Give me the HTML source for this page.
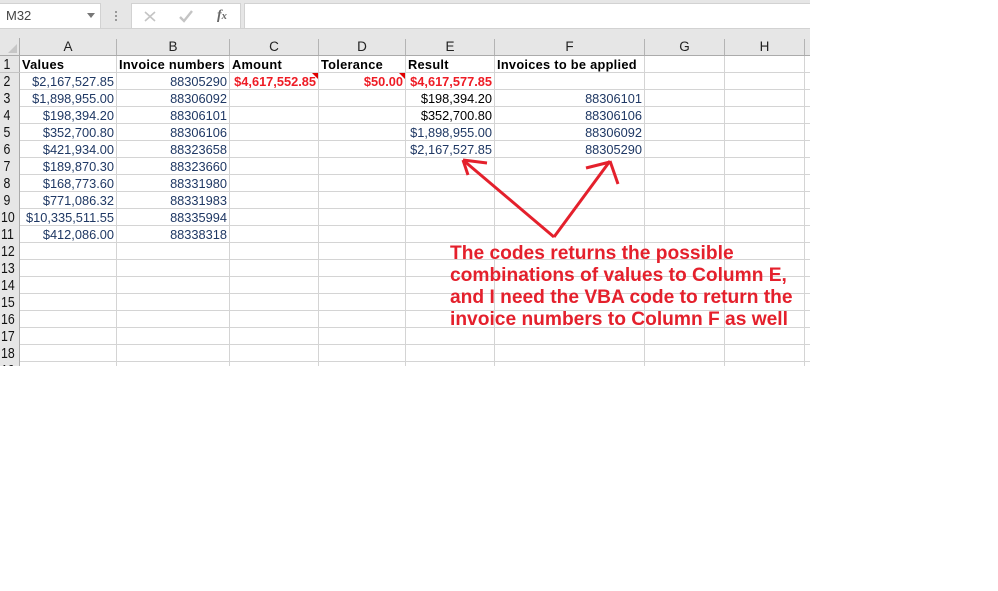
<!DOCTYPE html>
<html>
<head>
<meta charset="utf-8">
<style>
html,body{margin:0;padding:0;background:#fff;}
body{width:998px;height:591px;position:relative;overflow:hidden;font-family:"Liberation Sans",Arial,sans-serif;}
div{position:absolute;box-sizing:border-box;}
.h{background:#d4d4d4;height:1px;left:20px;width:790px;}
.v{background:#d4d4d4;width:1px;top:56px;height:310px;}
.c{font-size:12.8px;line-height:17px;height:17px;white-space:nowrap;color:#1f3864;text-align:right;}
.b{font-weight:bold;color:#000;text-align:left;letter-spacing:.28px;}
.r{font-weight:bold;color:#ee1c25;}
.k{color:#000;}
.rh{left:0;width:14px;text-align:center;font-size:14.5px;line-height:19px;height:17px;color:#111;transform:scaleX(.85);}
.ch{top:39px;text-align:center;font-size:13.5px;line-height:16px;height:16px;color:#222;}
.tick{top:39px;width:1px;height:16px;background:#b4b4b4;}
.t{font-size:19.2px;font-weight:bold;color:#e4202c;line-height:22px;white-space:nowrap;left:450px;height:22px;}
.tri{width:0;height:0;border-top:6px solid #e00000;border-left:6px solid transparent;}
</style>
</head>
<body>
<!-- top bar -->
<div style="left:0;top:0;width:810px;height:38px;background:#e6e6e6"></div>
<div style="left:0;top:3px;width:101px;height:26px;background:#fff;border:1px solid #d2d2d2;border-left:0"></div>
<div style="left:6px;top:8px;font-size:13px;line-height:16px;color:#444">M32</div>
<div style="left:87px;top:13px;width:0;height:0;border-left:4px solid transparent;border-right:4px solid transparent;border-top:5px solid #777"></div>
<div style="left:115px;top:11px;width:2px;height:2px;background:#999"></div>
<div style="left:115px;top:15px;width:2px;height:2px;background:#999"></div>
<div style="left:115px;top:19px;width:2px;height:2px;background:#999"></div>
<div style="left:131px;top:3px;width:110px;height:26px;background:#fff;border:1px solid #d2d2d2"></div>
<svg style="position:absolute;left:131px;top:3px" width="110" height="26" viewBox="0 0 110 26">
<path d="M14 9L24 18M24 9L14 18" stroke="#c4c4c4" stroke-width="1.6" fill="none"/>
<path d="M49 14L53 18L61 8" stroke="#c4c4c4" stroke-width="2.4" fill="none"/>
</svg>
<div style="left:217px;top:8px;font-family:'Liberation Serif',serif;font-style:italic;font-weight:bold;font-size:14px;line-height:16px;color:#666">f<span style="font-size:10.5px">x</span></div>
<div style="left:244px;top:3px;width:566px;height:26px;background:#fff;border:1px solid #d2d2d2;border-right:0"></div>
<div style="left:0;top:28px;width:810px;height:1px;background:#d2d2d2"></div>

<!-- headers -->
<div style="left:0;top:38px;width:810px;height:18px;background:#e6e6e6"></div>
<div style="left:0;top:55px;width:810px;height:1px;background:#ababab"></div>
<div style="left:0;top:56px;width:20px;height:310px;background:#e6e6e6"></div>
<div style="left:19px;top:38px;width:1px;height:328px;background:#ababab"></div>
<svg style="position:absolute;left:8px;top:44px" width="9" height="9"><path d="M9 0V9H0Z" fill="#c6c6c6"/></svg>
<div class="tick" style="left:116px"></div><div class="tick" style="left:229px"></div><div class="tick" style="left:318px"></div><div class="tick" style="left:405px"></div><div class="tick" style="left:494px"></div><div class="tick" style="left:644px"></div><div class="tick" style="left:724px"></div><div class="tick" style="left:804px"></div>
<div class="ch" style="left:20px;width:96px">A</div>
<div class="ch" style="left:117px;width:112px">B</div>
<div class="ch" style="left:230px;width:88px">C</div>
<div class="ch" style="left:319px;width:86px">D</div>
<div class="ch" style="left:406px;width:88px">E</div>
<div class="ch" style="left:495px;width:149px">F</div>
<div class="ch" style="left:645px;width:79px">G</div>
<div class="ch" style="left:725px;width:79px">H</div>

<!-- row numbers -->
<div class="rh" style="top:56px">1</div><div class="rh" style="top:73px">2</div><div class="rh" style="top:90px">3</div><div class="rh" style="top:107px">4</div><div class="rh" style="top:124px">5</div><div class="rh" style="top:141px">6</div><div class="rh" style="top:158px">7</div><div class="rh" style="top:175px">8</div><div class="rh" style="top:192px">9</div><div class="rh" style="top:209px">10</div><div class="rh" style="top:226px">11</div><div class="rh" style="top:243px">12</div><div class="rh" style="top:260px">13</div><div class="rh" style="top:277px">14</div><div class="rh" style="top:294px">15</div><div class="rh" style="top:311px">16</div><div class="rh" style="top:328px">17</div><div class="rh" style="top:345px">18</div>
<div style="left:0;top:362px;width:14px;height:4px;overflow:hidden;text-align:center;font-size:14.5px;line-height:19px;color:#111;transform:scaleX(.85)">19</div>
<div style="left:0;top:72px;width:20px;height:1px;background:#c4c4c4"></div>

<!-- grid -->
<div class="h" style="top:72px"></div><div class="h" style="top:89px"></div><div class="h" style="top:106px"></div><div class="h" style="top:123px"></div><div class="h" style="top:140px"></div><div class="h" style="top:157px"></div><div class="h" style="top:174px"></div><div class="h" style="top:191px"></div><div class="h" style="top:208px"></div><div class="h" style="top:225px"></div><div class="h" style="top:242px"></div><div class="h" style="top:259px"></div><div class="h" style="top:276px"></div><div class="h" style="top:293px"></div><div class="h" style="top:310px"></div><div class="h" style="top:327px"></div><div class="h" style="top:344px"></div><div class="h" style="top:361px"></div>
<div class="v" style="left:116px"></div><div class="v" style="left:229px"></div><div class="v" style="left:318px"></div><div class="v" style="left:405px"></div><div class="v" style="left:494px"></div><div class="v" style="left:644px"></div><div class="v" style="left:724px"></div><div class="v" style="left:804px"></div>

<!-- row 1 headings -->
<div class="c b" style="left:22px;top:56px">Values</div>
<div class="c b" style="left:119px;top:56px">Invoice numbers</div>
<div class="c b" style="left:232px;top:56px">Amount</div>
<div class="c b" style="left:321px;top:56px">Tolerance</div>
<div class="c b" style="left:408px;top:56px">Result</div>
<div class="c b" style="left:497px;top:56px">Invoices to be applied</div>

<!-- col A -->
<div class="c" style="right:884px;top:73px">$2,167,527.85</div>
<div class="c" style="right:884px;top:90px">$1,898,955.00</div>
<div class="c" style="right:884px;top:107px">$198,394.20</div>
<div class="c" style="right:884px;top:124px">$352,700.80</div>
<div class="c" style="right:884px;top:141px">$421,934.00</div>
<div class="c" style="right:884px;top:158px">$189,870.30</div>
<div class="c" style="right:884px;top:175px">$168,773.60</div>
<div class="c" style="right:884px;top:192px">$771,086.32</div>
<div class="c" style="right:884px;top:209px">$10,335,511.55</div>
<div class="c" style="right:884px;top:226px">$412,086.00</div>
<!-- col B -->
<div class="c" style="right:771px;top:73px">88305290</div>
<div class="c" style="right:771px;top:90px">88306092</div>
<div class="c" style="right:771px;top:107px">88306101</div>
<div class="c" style="right:771px;top:124px">88306106</div>
<div class="c" style="right:771px;top:141px">88323658</div>
<div class="c" style="right:771px;top:158px">88323660</div>
<div class="c" style="right:771px;top:175px">88331980</div>
<div class="c" style="right:771px;top:192px">88331983</div>
<div class="c" style="right:771px;top:209px">88335994</div>
<div class="c" style="right:771px;top:226px">88338318</div>
<!-- red row -->
<div class="c r" style="right:682px;top:73px">$4,617,552.85</div>
<div class="tri" style="left:312px;top:73px"></div>
<div class="c r" style="right:595px;top:73px">$50.00</div>
<div class="tri" style="left:399px;top:73px"></div>
<div class="c r" style="right:506px;top:73px">$4,617,577.85</div>
<!-- col E -->
<div class="c k" style="right:506px;top:90px">$198,394.20</div>
<div class="c k" style="right:506px;top:107px">$352,700.80</div>
<div class="c" style="right:506px;top:124px">$1,898,955.00</div>
<div class="c" style="right:506px;top:141px">$2,167,527.85</div>
<!-- col F -->
<div class="c" style="right:356px;top:90px">88306101</div>
<div class="c" style="right:356px;top:107px">88306106</div>
<div class="c" style="right:356px;top:124px">88306092</div>
<div class="c" style="right:356px;top:141px">88305290</div>

<!-- arrows -->
<svg style="position:absolute;left:0;top:0" width="998" height="591" viewBox="0 0 998 591">
<g stroke="#e4202c" stroke-width="3" fill="none">
<path d="M554 237L463 160"/>
<path d="M554 237L610 161"/>
<path d="M463 160L487 163"/>
<path d="M463 160L468 175"/>
<path d="M586 168L610 162"/>
<path d="M610 161L618 184"/>
</g>
</svg>

<!-- annotation -->
<div class="t" style="top:243px">The codes returns the possible</div>
<div class="t" style="top:265px">combinations of values to Column E,</div>
<div class="t" style="top:287px">and I need the VBA code to return the</div>
<div class="t" style="top:309px">invoice numbers to Column F as well</div>
</body>
</html>
